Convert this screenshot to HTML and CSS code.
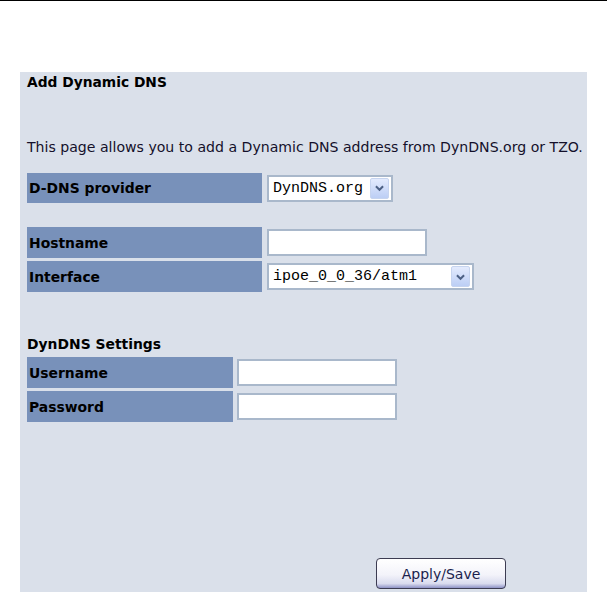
FILE: index.html
```html
<!DOCTYPE html>
<html>
<head>
<meta charset="utf-8">
<link rel="stylesheet" href="styles.css">
</head>
<body>
<div class="rule"></div>
<div class="panel">
  <div class="title">Add Dynamic DNS</div>
  <div class="desc">This page allows you to add a Dynamic DNS address from DynDNS.org or TZO.</div>

  <div class="grid grid-wide provider">
    <div class="label">D-DNS provider</div>
    <div class="select sel-provider"><span class="sel-text">DynDNS.org</span><span class="arrow"><svg width="19" height="20" viewBox="0 0 19 20"><path d="M5.5 8 L9.5 12 L13.5 8" fill="none" stroke="#4d6185" stroke-width="2.2"/></svg></span></div>
  </div>

  <div class="grid grid-wide host">
    <div class="label">Hostname</div>
    <div class="input in-host"></div>
    <div class="label">Interface</div>
    <div class="select sel-iface"><span class="sel-text">ipoe_0_0_36/atm1</span><span class="arrow"><svg width="19" height="20" viewBox="0 0 19 20"><path d="M5.5 8 L9.5 12 L13.5 8" fill="none" stroke="#4d6185" stroke-width="2.2"/></svg></span></div>
  </div>

  <div class="subtitle">DynDNS Settings</div>
  <div class="grid grid-narrow">
    <div class="label">Username</div>
    <div class="input in-user"></div>
    <div class="label">Password</div>
    <div class="input in-user"></div>
  </div>

  <div class="actions">
    <button class="btn">Apply/Save</button>
  </div>
</div>
</body>
</html>
```

FILE: styles.css
```css
html, body {
  margin: 0;
  padding: 0;
  background: #fff;
}
body {
  font-family: "DejaVu Sans", Verdana, sans-serif;
  color: #111;
}
.rule {
  height: 1px;
  background: #000;
}
.panel {
  margin: 71px 0 0 20px;
  width: 567px;
  height: 520px;
  background: #dae0ea;
  padding: 2px 0 0 7px;
  box-sizing: border-box;
}
.title {
  font-weight: bold;
  font-size: 13.8px;
  line-height: 16px;
  color: #000;
}
.desc {
  margin-top: 49px;
  font-size: 14.1px;
  line-height: 16px;
  color: #14102a;
  white-space: nowrap;
}
.grid {
  display: grid;
  row-gap: 3px;
  align-items: center;
}
.grid-wide {
  grid-template-columns: 235px auto;
  column-gap: 5px;
  justify-items: start;
}
.grid-narrow {
  grid-template-columns: 206px auto;
  column-gap: 4px;
  justify-items: start;
  margin-top: 5px;
}
.provider {
  margin-top: 18px;
}
.host {
  margin-top: 24px;
}
.label {
  background: #7891ba;
  height: 31px;
  width: 100%;
  box-sizing: border-box;
  padding-left: 2px;
  display: flex;
  align-items: center;
  font-weight: bold;
  font-size: 13.9px;
  color: #000;
}
.provider .label {
  height: 30px;
}
.input {
  background: #fff;
  border: 2px solid #a9b8cb;
  height: 27px;
  box-sizing: border-box;
}
.in-host {
  width: 160px;
}
.in-user {
  width: 160px;
}
.select {
  background: #fff;
  border: 2px solid #a9b8cb;
  height: 27px;
  box-sizing: border-box;
  display: flex;
  align-items: center;
  justify-content: space-between;
  padding: 0 2px 0 4px;
}
.sel-provider {
  width: 126px;
}
.sel-iface {
  width: 207px;
}
.sel-text {
  font-family: "Liberation Mono", "DejaVu Sans Mono", monospace;
  font-size: 15px;
  color: #000;
  white-space: nowrap;
}
.arrow {
  width: 19px;
  height: 21px;
  background: linear-gradient(#e3ebfd, #bccef5);
  border: 1px solid #c6d4ef;
  border-radius: 2px;
  box-sizing: border-box;
  display: flex;
  align-items: center;
  justify-content: center;
}
.arrow svg {
  display: block;
}
.subtitle {
  margin-top: 44px;
  font-weight: bold;
  font-size: 13.9px;
  line-height: 16px;
  color: #000;
}
.actions {
  display: flex;
  margin-top: 136px;
  padding-left: 349px;
}
.btn {
  width: 130px;
  height: 31px;
  border: 1px solid #3c3c52;
  border-radius: 4px;
  background: linear-gradient(#ffffff 0%, #f3f3fa 55%, #d9dbee 85%, #8e92c6 100%);
  font-family: "DejaVu Sans", Verdana, sans-serif;
  font-size: 14px;
  color: #1b1f4e;
  padding: 0;
}
```
